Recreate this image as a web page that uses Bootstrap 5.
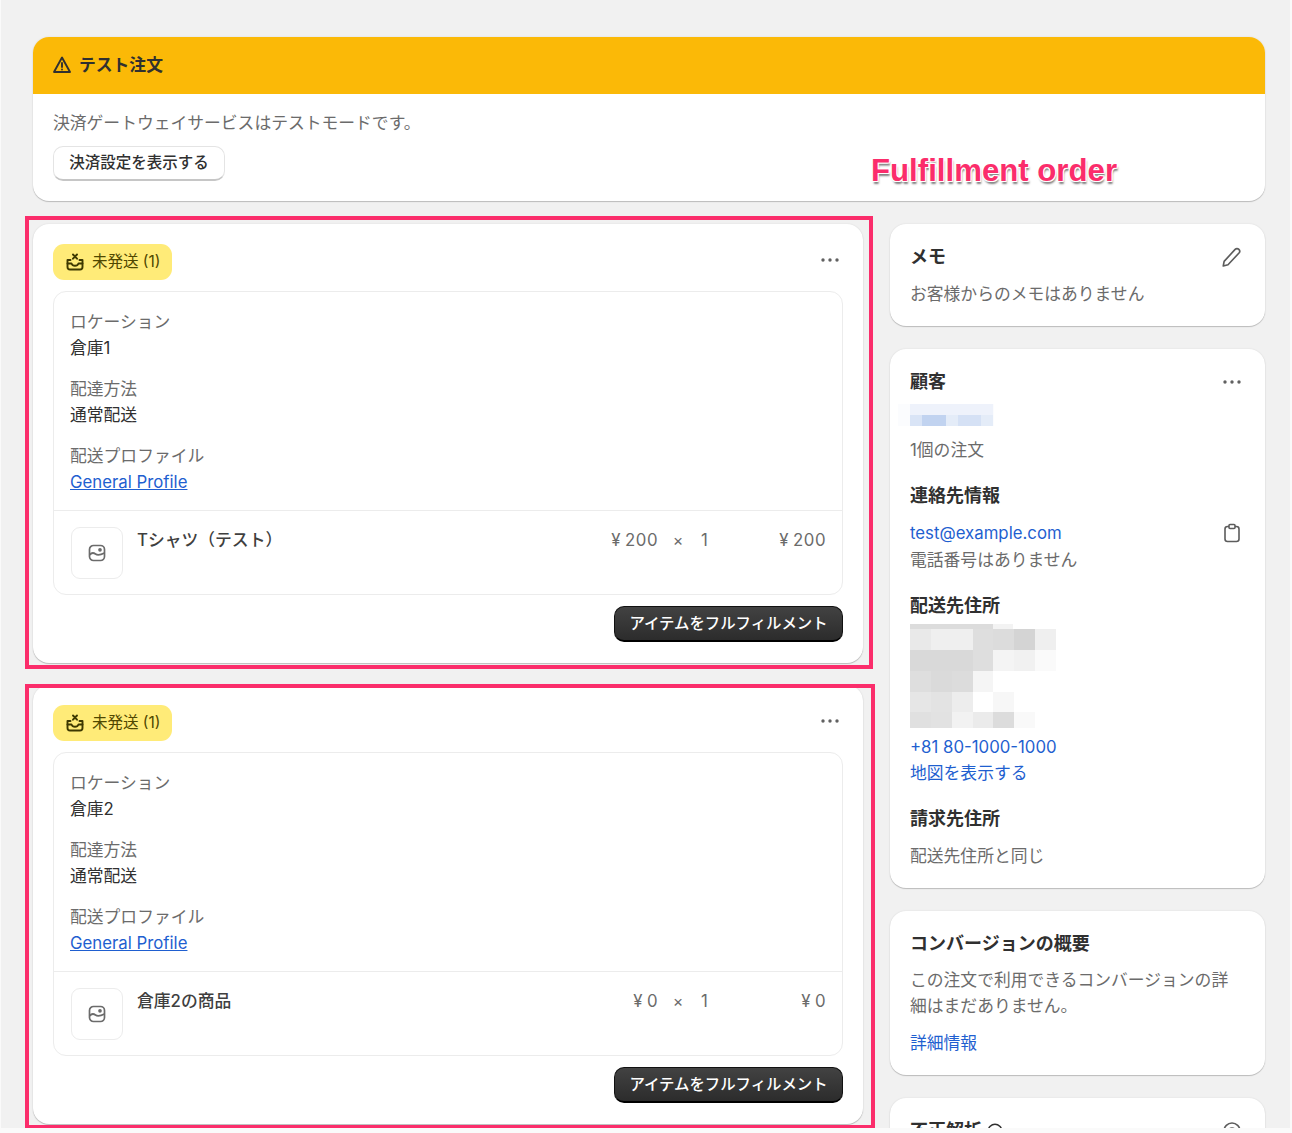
<!DOCTYPE html>
<html lang="ja">
<head>
    <meta charset="UTF-8">
    <meta name="viewport" content="width=device-width, initial-scale=1.0">
    <title>Fulfillment order</title>
    <link href="https://cdn.jsdelivr.net/npm/bootstrap@5.3.2/dist/css/bootstrap.min.css" rel="stylesheet">
    <style>
        body {
            background-color: #fafafa;
            font-family: Inter, "Noto Sans CJK JP", sans-serif;
            font-size: 16.8px;
            line-height: 26px;
            color: #303030;
        }
        .od-shot {
            position: relative;
            width: 1289px;
            height: 1128px;
            margin-left: 1px;
            padding: 37px 25px 0 32px;
            overflow: hidden;
            background-color: #f1f1f1;
        }
        .od-panel {
            border: 0;
            border-radius: 16px;
            background: #fff;
            box-shadow: 0 1px 1px rgba(0, 0, 0, .2), 0 0 2px rgba(0, 0, 0, .1);
        }
        .od-alert-head {
            height: 57px;
            padding: 0 19px 1px;
            background: #fbb907;
            border: 0;
            border-radius: 16px 16px 0 0 !important;
            font-size: 16.8px;
            font-weight: 700;
            color: #303030;
            column-gap: 7px !important;
        }
        .od-alert-body { padding: 16px 20px 20px; }
        .od-muted { color: #6b6b6b; }
        .od-title { font-size: 18px; font-weight: 700; color: #303030; }
        .od-white-btn {
            height: 35px;
            padding: 0 14px;
            margin-top: 10px;
            width: 172px;
            font-size: 15.5px;
            font-weight: 500;
            color: #303030;
            background: #fff;
            border: 1px solid #e4e4e4;
            border-bottom: 2px solid #c6c6c6;
            border-radius: 10px;
        }
        .od-annotation {
            position: absolute;
            left: 870px;
            top: 152px;
            font-family: "Liberation Sans", sans-serif;
            font-size: 31.2px;
            line-height: 38px;
            font-weight: 700;
            color: #fb2d6b;
            text-shadow: -1px -1px 0 #fff, 1px -1px 0 #fff, -1px 1px 0 #fff, 1px 1px 0 #fff, 1px 3px 2px rgba(0, 0, 0, .5);
        }
        .od-columns {
            display: grid;
            grid-template-columns: 830px 375px;
            column-gap: 27px;
            margin-top: 23px;
        }
        .od-order { position: relative; padding: 20px; height: 439px; margin-bottom: 22px; }
        .od-frame {
            position: absolute;
            border: 4px solid #fb2d6b;
            pointer-events: none;
        }
        .od-frame-a { top: -8px; left: -8px; right: -10px; bottom: -6px; }
        .od-frame-b { top: -1px; left: -8px; right: -12px; bottom: -5px; }
        .od-status {
            height: 36px;
            padding: 0 12px;
            gap: 7px;
            background: #ffeb78;
            border-radius: 11px;
            font-size: 15.5px;
            color: #4f4700;
        }
        .od-dots { width: 18px; height: 4px; margin-right: 4px; color: #616161; }
        .od-dots-top { margin-top: 14px; }
        .od-tool { margin-right: 3px; }
        .od-inner {
            margin-top: 11px;
            height: 304px;
            border: 1.5px solid #ececec;
            border-radius: 13px;
        }
        .od-info { height: 219px; padding: 17px 16px 0; border-bottom: 1.5px solid #ececec; }
        .od-info p { margin: 0 0 15px; }
        .od-link { color: #1f5fd0; text-decoration: underline; }
        .od-plain-link { color: #1f5fd0; text-decoration: none; }
        .od-item { padding: 16px 16px 0 17px; }
        .od-thumb {
            width: 52px;
            height: 52px;
            margin-right: 14px;
            border: 1.5px solid #ececec;
            border-radius: 9px;
        }
        .od-item-title { font-weight: 500; color: #3f3f3f; }
        .od-price { width: 118px; text-align: right; letter-spacing: .5px; }
        .od-yen { margin-right: 4px; }
        .od-times { width: 43px; padding-right: 3px; text-align: center; font-size: 16px; }
        .od-qty { width: 5px; text-align: right; }
        .od-total { width: 120px; text-align: right; letter-spacing: .5px; }
        .od-dark-btn {
            height: 36px;
            width: 229px;
            margin-top: 11px;
            padding: 0;
            font-size: 15.4px;
            font-weight: 500;
            color: #fff;
            background: linear-gradient(#424242, #2c2c2c);
            border: 1px solid #111;
            border-bottom: 2.5px solid #000;
            border-radius: 10px;
        }
        .od-side { padding: 20px 20px 19px; margin-bottom: 23px; }
        .od-side p { margin: 0; }
        .od-side p.od-mt10, .od-mt10 { margin-top: 11px; }
        .od-side p.od-tight { margin-top: 1px; }
        .od-side p.od-narrow { max-width: 325px; margin-top: 10px; }
        .od-icon-gray { color: #5c5c5c; }
        .od-blur-name { display: block; width: 96px; height: 22px; margin: 9px 0 11px -12px; }
        .od-blur-address { display: block; width: 146px; height: 104px; margin-top: 5px; margin-bottom: 6px; }
        .od-sub { margin-top: 20px; }
        .od-cut { height: 60px; }
    </style>
</head>
<body>
<div class="od-shot">

    <!-- テスト注文 -->
    <div class="card od-panel">
        <div class="card-header od-alert-head d-flex align-items-center">
            <svg width="20" height="20" viewBox="0 0 20 20" fill="none" stroke="#303030" stroke-width="1.900" stroke-linejoin="round" stroke-linecap="round">
                <path d="M10 2.500 2 17h16z"/>
                <path d="M10 8v4"/>
                <path d="M10 14.500v.1"/>
            </svg>
            <span>テスト注文</span>
        </div>
        <div class="od-alert-body">
            <div class="od-muted">決済ゲートウェイサービスはテストモードです。</div>
            <button class="btn od-white-btn d-block">決済設定を表示する</button>
        </div>
    </div>
    <div class="od-annotation">Fulfillment order</div>

    <div class="od-columns">
        <div>
            <!-- 倉庫1 -->
            <div class="card od-panel od-order">
                <div class="d-flex justify-content-between align-items-start">
                    <span class="od-status d-inline-flex align-items-center">
                        <svg width="20" height="20" viewBox="0 0 20 20" fill="none" stroke="#3d3800" stroke-width="1.900" stroke-linecap="round" stroke-linejoin="round">
                            <path d="M5.500 8H2.500v7a2.500 2.500 0 0 0 2.500 2.500h10a2.500 2.500 0 0 0 2.500-2.500V8h-3"/>
                            <path d="M2.500 11.500h4c.6 1.600 2 2.300 3.500 2.300s2.900-.7 3.500-2.300h4"/>
                            <path d="m8 2.500 4 4.200M12 2.500 8 6.700"/>
                        </svg>
                        未発送 (1)
                    </span>
                    <svg class="od-dots od-dots-top" viewBox="0 0 18 4" fill="currentColor"><circle cx="2" cy="2" r="1.700"/><circle cx="9" cy="2" r="1.700"/><circle cx="16" cy="2" r="1.700"/></svg>
                </div>
                <div class="od-inner">
                    <div class="od-info">
                        <p><span class="od-muted">ロケーション</span><br>倉庫1</p>
                        <p><span class="od-muted">配達方法</span><br>通常配送</p>
                        <p><span class="od-muted">配送プロファイル</span><br><a href="#" class="od-link">General Profile</a></p>
                    </div>
                    <div class="od-item d-flex align-items-start">
                        <div class="od-thumb d-flex align-items-center justify-content-center flex-shrink-0">
                            <svg width="20" height="20" viewBox="0 0 20 20" fill="none" stroke="#6b6b6b" stroke-width="1.700" stroke-linejoin="round">
                                <rect x="2.500" y="2.500" width="15" height="15" rx="4"/>
                                <path d="M2.500 12c2-2.500 4-2.500 6-1s4 1.500 9-1"/>
                                <circle cx="13" cy="6.800" r="1" fill="#6b6b6b"/>
                            </svg>
                        </div>
                        <div class="od-item-title flex-grow-1">Tシャツ（テスト）</div>
                        <div class="od-price od-muted"><span class="od-yen">¥</span>200</div>
                        <div class="od-times od-muted">×</div>
                        <div class="od-qty od-muted">1</div>
                        <div class="od-total od-muted"><span class="od-yen">¥</span>200</div>
                    </div>
                </div>
                <div class="text-end">
                    <button class="btn od-dark-btn">アイテムをフルフィルメント</button>
                </div>
                <div class="od-frame od-frame-a"></div>
            </div>

            <!-- 倉庫2 -->
            <div class="card od-panel od-order">
                <div class="d-flex justify-content-between align-items-start">
                    <span class="od-status d-inline-flex align-items-center">
                        <svg width="20" height="20" viewBox="0 0 20 20" fill="none" stroke="#3d3800" stroke-width="1.900" stroke-linecap="round" stroke-linejoin="round">
                            <path d="M5.500 8H2.500v7a2.500 2.500 0 0 0 2.500 2.500h10a2.500 2.500 0 0 0 2.500-2.500V8h-3"/>
                            <path d="M2.500 11.500h4c.6 1.600 2 2.300 3.500 2.300s2.900-.7 3.500-2.300h4"/>
                            <path d="m8 2.500 4 4.200M12 2.500 8 6.700"/>
                        </svg>
                        未発送 (1)
                    </span>
                    <svg class="od-dots od-dots-top" viewBox="0 0 18 4" fill="currentColor"><circle cx="2" cy="2" r="1.700"/><circle cx="9" cy="2" r="1.700"/><circle cx="16" cy="2" r="1.700"/></svg>
                </div>
                <div class="od-inner">
                    <div class="od-info">
                        <p><span class="od-muted">ロケーション</span><br>倉庫2</p>
                        <p><span class="od-muted">配達方法</span><br>通常配送</p>
                        <p><span class="od-muted">配送プロファイル</span><br><a href="#" class="od-link">General Profile</a></p>
                    </div>
                    <div class="od-item d-flex align-items-start">
                        <div class="od-thumb d-flex align-items-center justify-content-center flex-shrink-0">
                            <svg width="20" height="20" viewBox="0 0 20 20" fill="none" stroke="#6b6b6b" stroke-width="1.700" stroke-linejoin="round">
                                <rect x="2.500" y="2.500" width="15" height="15" rx="4"/>
                                <path d="M2.500 12c2-2.500 4-2.500 6-1s4 1.500 9-1"/>
                                <circle cx="13" cy="6.800" r="1" fill="#6b6b6b"/>
                            </svg>
                        </div>
                        <div class="od-item-title flex-grow-1">倉庫2の商品</div>
                        <div class="od-price od-muted"><span class="od-yen">¥</span>0</div>
                        <div class="od-times od-muted">×</div>
                        <div class="od-qty od-muted">1</div>
                        <div class="od-total od-muted"><span class="od-yen">¥</span>0</div>
                    </div>
                </div>
                <div class="text-end">
                    <button class="btn od-dark-btn">アイテムをフルフィルメント</button>
                </div>
                <div class="od-frame od-frame-b"></div>
            </div>
        </div>

        <div>
            <!-- メモ -->
            <div class="card od-panel od-side">
                <div class="d-flex justify-content-between align-items-center">
                    <span class="od-title">メモ</span>
                    <svg class="od-icon-gray od-tool" width="20" height="20" viewBox="2 2 16 16" fill="none" stroke="currentColor" stroke-width="1.300" stroke-linejoin="round">
                        <path d="M3 17.200l.7-3.700 8.800-9.600a2.100 2.100 0 0 1 3 0 2.100 2.100 0 0 1 .1 2.900l-8.800 9.400z"/>
                    </svg>
                </div>
                <p class="od-muted od-mt10">お客様からのメモはありません</p>
            </div>

            <!-- 顧客 -->
            <div class="card od-panel od-side">
                <div class="d-flex justify-content-between align-items-center">
                    <span class="od-title">顧客</span>
                    <svg class="od-dots" viewBox="0 0 18 4" fill="currentColor"><circle cx="2" cy="2" r="1.700"/><circle cx="9" cy="2" r="1.700"/><circle cx="16" cy="2" r="1.700"/></svg>
                </div>
                <svg class="od-blur-name" viewBox="0 0 96 22" shape-rendering="crispEdges">
                    <rect x="0" y="0" width="96" height="22" fill="#fbfcfe"/>
                    <rect x="12" y="0" width="83" height="11" fill="#eef2fb"/>
                    <rect x="12" y="11" width="12" height="11" fill="#d9e4f6"/>
                    <rect x="24" y="11" width="24" height="11" fill="#c1d3f0"/>
                    <rect x="48" y="11" width="12" height="11" fill="#e4ecf8"/>
                    <rect x="60" y="11" width="23" height="11" fill="#d5e1f5"/>
                    <rect x="83" y="11" width="12" height="11" fill="#e4ecf8"/>
                </svg>
                <p class="od-muted">1個の注文</p>
                <div class="od-title od-sub">連絡先情報</div>
                <div class="d-flex justify-content-between align-items-center od-mt10">
                    <a href="#" class="od-plain-link">test@example.com</a>
                    <svg class="od-icon-gray od-tool" width="20" height="20" viewBox="0 0 20 20" fill="none" stroke="currentColor" stroke-width="1.600" stroke-linejoin="round">
                        <rect x="3" y="3.500" width="14" height="15" rx="2.500"/>
                        <rect x="7" y="1.500" width="6" height="4" rx="1" fill="#fff"/>
                    </svg>
                </div>
                <p class="od-muted od-tight">電話番号はありません</p>
                <div class="od-title od-sub">配送先住所</div>
                <svg class="od-blur-address" viewBox="0 0 146 104" shape-rendering="crispEdges">
                    <rect x="0" y="0" width="83" height="5" fill="#dcdcdc"/>
                    <rect x="83" y="0" width="20" height="5" fill="#f3f3f3"/>
                    <rect x="0" y="5" width="21" height="21" fill="#e9e9e9"/>
                    <rect x="21" y="5" width="42" height="21" fill="#efefef"/>
                    <rect x="63" y="5" width="20" height="21" fill="#dedede"/>
                    <rect x="83" y="5" width="21" height="21" fill="#dcdcdc"/>
                    <rect x="104" y="5" width="21" height="21" fill="#d4d4d4"/>
                    <rect x="125" y="5" width="21" height="21" fill="#efefef"/>
                    <rect x="0" y="26" width="63" height="21" fill="#d9d9d9"/>
                    <rect x="63" y="26" width="20" height="21" fill="#dedede"/>
                    <rect x="83" y="26" width="21" height="21" fill="#f4f4f4"/>
                    <rect x="104" y="26" width="21" height="21" fill="#f1f1f1"/>
                    <rect x="125" y="26" width="21" height="21" fill="#fafafa"/>
                    <rect x="0" y="47" width="21" height="21" fill="#dedede"/>
                    <rect x="21" y="47" width="21" height="21" fill="#dadada"/>
                    <rect x="42" y="47" width="21" height="21" fill="#dcdcdc"/>
                    <rect x="63" y="47" width="20" height="21" fill="#f5f5f5"/>
                    <rect x="0" y="68" width="21" height="20" fill="#e6e6e6"/>
                    <rect x="21" y="68" width="21" height="20" fill="#e3e3e3"/>
                    <rect x="42" y="68" width="21" height="20" fill="#ededed"/>
                    <rect x="83" y="68" width="21" height="20" fill="#f7f7f7"/>
                    <rect x="0" y="88" width="21" height="16" fill="#e0e0e0"/>
                    <rect x="21" y="88" width="21" height="16" fill="#e2e2e2"/>
                    <rect x="42" y="88" width="21" height="16" fill="#f2f2f2"/>
                    <rect x="63" y="88" width="20" height="16" fill="#ebebeb"/>
                    <rect x="83" y="88" width="21" height="16" fill="#dcdcdc"/>
                    <rect x="104" y="88" width="21" height="16" fill="#f9f9f9"/>
                </svg>
                <div><a href="#" class="od-plain-link">+81 80-1000-1000</a></div>
                <div><a href="#" class="od-plain-link">地図を表示する</a></div>
                <div class="od-title od-sub">請求先住所</div>
                <p class="od-muted od-mt10">配送先住所と同じ</p>
            </div>

            <!-- コンバージョンの概要 -->
            <div class="card od-panel od-side">
                <div class="od-title">コンバージョンの概要</div>
                <p class="od-muted od-narrow">この注文で利用できるコンバージョンの詳細はまだありません。</p>
                <div class="od-mt10"><a href="#" class="od-plain-link">詳細情報</a></div>
            </div>

            <!-- 不正解析 -->
            <div class="card od-panel od-side od-cut">
                <div class="d-flex justify-content-between align-items-center">
                    <span class="od-title d-inline-flex align-items-center gap-1">不正解析
                        <svg width="18" height="18" viewBox="0 0 20 20" fill="none" stroke="#303030" stroke-width="1.700"><circle cx="10" cy="10" r="7.500"/></svg>
                    </span>
                    <svg class="od-icon-gray od-tool" width="20" height="20" viewBox="0 0 20 20" fill="none" stroke="currentColor" stroke-width="1.600"><circle cx="10" cy="10" r="8"/><circle cx="10" cy="10" r="3"/></svg>
                </div>
            </div>
        </div>
    </div>
</div>
<script src="https://cdn.jsdelivr.net/npm/bootstrap@5.3.2/dist/js/bootstrap.bundle.min.js"></script>
</body>
</html>
